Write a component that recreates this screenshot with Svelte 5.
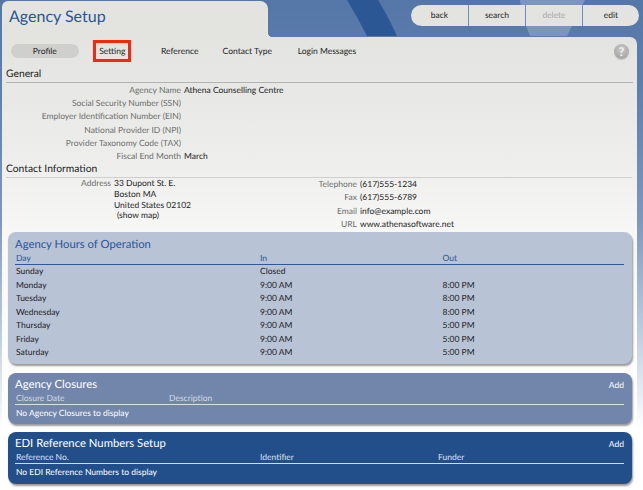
<script>
  const general = [
    ['Agency Name', 'Athena Counselling Centre'],
    ['Social Security Number (SSN)', ''],
    ['Employer Identification Number (EIN)', ''],
    ['National Provider ID (NPI)', ''],
    ['Provider Taxonomy Code (TAX)', ''],
    ['Fiscal End Month', 'March']
  ];
  const contact = [
    ['Telephone', '(617)555-1234'],
    ['Fax', '(617)555-6789'],
    ['Email', 'info@example.com'],
    ['URL', 'www.athenasoftware.net']
  ];
  const hours = [
    ['Sunday', 'Closed', ''],
    ['Monday', '9:00 AM', '8:00 PM'],
    ['Tuesday', '9:00 AM', '8:00 PM'],
    ['Wednesday', '9:00 AM', '8:00 PM'],
    ['Thursday', '9:00 AM', '5:00 PM'],
    ['Friday', '9:00 AM', '5:00 PM'],
    ['Saturday', '9:00 AM', '5:00 PM']
  ];
</script>

<div class="page">
  <svg class="swoosh" width="643" height="36" viewBox="0 0 643 36" aria-hidden="true">
    <path d="M347 0 C354 12 361 24 367 36 L397 36 C391 23 385 11 378 0 Z" fill="#2b5894" />
    <path d="M520 0 L585 0 L567 36 L530 36 C525 24 521 12 520 0 Z" fill="#7c95bc" />
  </svg>

  <header class="top">
    <div class="title-tab"><h1>Agency Setup</h1></div>
    <nav class="actions">
      <span>back</span>
      <span>search</span>
      <span class="off">delete</span>
      <span>edit</span>
    </nav>
  </header>

  <main class="panel">
    <div class="tabs">
      <span class="tab active">Profile</span>
      <span class="tab marked">Setting</span>
      <span class="tab">Reference</span>
      <span class="tab">Contact Type</span>
      <span class="tab wide">Login Messages</span>
      <span class="help">?</span>
    </div>

    <h2 class="sec first">General</h2>
    <div class="general">
      {#each general as [k, v]}
        <div class="row"><span class="k">{k}</span><span class="v">{v}</span></div>
      {/each}
    </div>

    <h2 class="sec second">Contact Information</h2>
    <div class="contact">
      <div class="address">
        <span class="k">Address</span>
        <div class="v lines">
          <div>33 Dupont St. E.</div>
          <div>Boston MA</div>
          <div>United States 02102</div>
          <div class="map">(show map)</div>
        </div>
      </div>
      <div class="phones">
        {#each contact as [k, v]}
          <div class="row"><span class="k">{k}</span><span class="v">{v}</span></div>
        {/each}
      </div>
    </div>

    <section class="card hours">
      <h3>Agency Hours of Operation</h3>
      <div class="thead cols-h"><span>Day</span><span>In</span><span>Out</span></div>
      <div class="tbody">
        {#each hours as [d, a, b]}
          <div class="cols-h hrow"><span>{d}</span><span>{a}</span><span>{b}</span></div>
        {/each}
      </div>
    </section>

    <section class="card closures">
      <div class="head"><h3>Agency Closures</h3><span class="add">Add</span></div>
      <div class="thead cols-c"><span>Closure Date</span><span>Description</span></div>
      <div class="empty">No Agency Closures to display</div>
    </section>

    <section class="card edi">
      <div class="head"><h3>EDI Reference Numbers Setup</h3><span class="add">Add</span></div>
      <div class="thead cols-e"><span>Reference No.</span><span>Identifier</span><span>Funder</span></div>
      <div class="empty">No EDI Reference Numbers to display</div>
    </section>
  </main>
</div>

<style>
  :global(body) { margin: 0; background: #fff; }
  .page {
    position: relative;
    width: 643px;
    height: 490px;
    overflow: hidden;
    font-family: Lato, "Liberation Sans", sans-serif;
    font-size: 8.5px;
    text-rendering: geometricPrecision;
    color: #1d1d1d;
    background: linear-gradient(#5577a8 0, #5f7fae 90px, #7e97bf 220px, #c3d0e2 340px, #fff 430px);
  }
  .swoosh { position: absolute; left: 0; top: 0; }
  .top {
    position: relative;
    display: flex;
    justify-content: space-between;
    align-items: flex-start;
    height: 36px;
    padding: 1px 4px 0 2px;
  }
  .title-tab {
    position: relative;
    width: 266px;
    height: 36px;
    background: #e3e4e0;
    border-radius: 6px 8px 0 0;
  }
  .title-tab::after {
    content: "";
    position: absolute;
    left: 100%;
    bottom: 0;
    width: 5px;
    height: 5px;
    background: radial-gradient(circle at 100% 0, transparent 5px, #e3e4e0 5.5px);
  }
  h1 {
    margin: 0;
    padding: 5px 0 0 7px;
    font-size: 16px;
    line-height: 22px;
    font-weight: 400;
    color: #2a5596;
  }
  .actions {
    display: flex;
    margin-top: 4px;
    height: 21px;
    border-radius: 11px;
    overflow: hidden;
    background: #e3e4e0;
  }
  .actions span {
    width: 57px;
    line-height: 21px;
    text-align: center;
    border-left: 1px solid #6f8db8;
    box-sizing: border-box;
    color: #1d1d1d;
  }
  .actions span:first-child { border-left: 0; }
  .actions .off { color: #a9a9a7; }
  .panel {
    position: relative;
    box-sizing: border-box;
    margin: 0 6px 0 2px;
    height: 454px;
    padding: 0 5px 0 4px;
    border-radius: 0 7px 0 0;
    background: linear-gradient(#e3e4e0 0, #eeefec 130px, #f8f8f7 200px, #fff 360px);
  }
  .tabs {
    display: flex;
    align-items: center;
    height: 29px;
    margin-bottom: -1px;
    padding: 0 0 1px 5px;
    box-sizing: border-box;
    position: relative;
  }
  .tab {
    width: 67.5px;
    height: 14px;
    line-height: 14px;
    text-align: center;
    border-radius: 7px;
    position: relative;
    flex: none;
  }
  .tab.wide { width: 92px; }
  .tab.active { background: #cfcfcd; }
  .tab.marked::after {
    content: "";
    position: absolute;
    left: 14.5px;
    top: -4px;
    width: 38px;
    height: 22px;
    box-sizing: border-box;
    border: 3px solid #f0290f;
  }
  .help {
    margin-left: auto;
    margin-right: 3px;
    width: 15px;
    height: 15px;
    border-radius: 50%;
    text-align: center;
    line-height: 15px;
    font-weight: 700;
    font-size: 12px;
    color: #f2f2f2;
    background: radial-gradient(circle at 50% 35%, #c9c9c7, #a9a9a7 70%, #8e8e8c);
    box-shadow: 0 1px 1px rgba(0,0,0,.15);
  }
  .sec {
    margin: 0;
    font-size: 10.3px;
    line-height: 13px;
    font-weight: 400;
    color: #1d1d1d;
    padding-bottom: 1px;
    border-bottom: 1px solid #b3b3b1;
  }
  .sec.first { margin-top: 3px; margin-right: -1px; }
  .sec.second { margin-top: -1px; border-bottom-color: #cfcfcd; }
  .general { padding-top: 0.5px; }
  .row {
    display: flex;
    height: 13.4px;
    line-height: 13.4px;
    gap: 3px;
  }
  .k { color: #6d6d6d; }
  .v { color: #1d1d1d; }
  .general .k { width: 175px; text-align: right; flex: none; }
  .contact { display: flex; height: 54px; }
  .address { display: flex; gap: 3px; width: 230px; line-height: 10.6px; padding-top: 0.5px; }
  .address > .k { width: 105px; text-align: right; flex: none; }
  .lines .map { padding-left: 3px; }
  .phones .k { width: 121px; text-align: right; flex: none; }
  .card {
    box-sizing: border-box;
    margin: 0 0 0 2px;
    width: 624px;
    border-radius: 8px;
    padding: 4.5px 8px 0 7px;
    box-shadow: 1px 2px 2px rgba(70,70,70,.55);
  }
  h3 {
    margin: 0;
    font-size: 11.3px;
    line-height: 15px;
    font-weight: 400;
  }
  .thead {
    padding-left: 1px;
    height: 12px;
    line-height: 12px;
    border-bottom: 1px solid;
  }
  .cols-h { display: grid; grid-template-columns: 244px 182.5px 1fr; padding-left: 1px; }
  .cols-c { display: grid; grid-template-columns: 153px 1fr; }
  .cols-e { display: grid; grid-template-columns: 244px 178px 1fr; }
  .hours { height: 132px; padding-top: 5px; background: #b8c3d6; }
  .hours h3 { color: #2a5596; }
  .hours .thead { color: #2a5596; border-color: #2f5a97; }
  .tbody { padding-top: 0.5px; }
  .hrow { height: 13.5px; line-height: 13.5px; }
  .head { display: flex; justify-content: space-between; align-items: baseline; }
  .add { font-size: 8.5px; color: #fff; }
  .closures { height: 51px; margin-top: 9px; background: #7286ac; color: #fff; }
  .closures .thead { color: #d3dae7; border-color: #d9dfea; }
  .edi { height: 52px; margin-top: 8px; background: #224f8a; color: #fff; }
  .edi .thead { color: #dbe2ee; border-color: #d3dcea; }
  .empty { padding-left: 1px; height: 16px; line-height: 16px; }
</style>
